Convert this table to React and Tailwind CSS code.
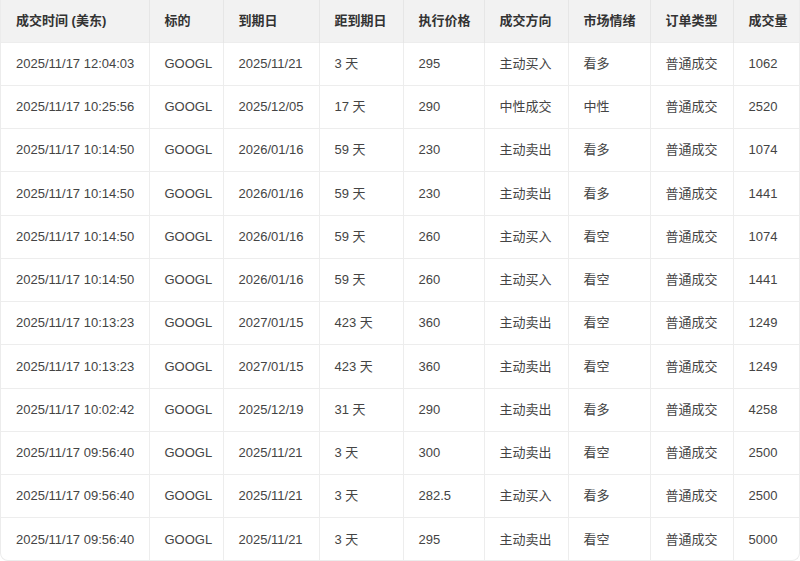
import React from 'react';

const columns = [
  { label: '成交时间 (美东)', w: 'w-[148px]' },
  { label: '标的', w: 'w-[74px]' },
  { label: '到期日', w: 'w-[96px]' },
  { label: '距到期日', w: 'w-[84px]' },
  { label: '执行价格', w: 'w-[81px]' },
  { label: '成交方向', w: 'w-[84px]' },
  { label: '市场情绪', w: 'w-[82px]' },
  { label: '订单类型', w: 'w-[83px]' },
  { label: '成交量', w: 'w-[68px]' },
];

const trades = [
  ['2025/11/17 12:04:03', 'GOOGL', '2025/11/21', '3 天', '295', '主动买入', '看多', '普通成交', '1062'],
  ['2025/11/17 10:25:56', 'GOOGL', '2025/12/05', '17 天', '290', '中性成交', '中性', '普通成交', '2520'],
  ['2025/11/17 10:14:50', 'GOOGL', '2026/01/16', '59 天', '230', '主动卖出', '看多', '普通成交', '1074'],
  ['2025/11/17 10:14:50', 'GOOGL', '2026/01/16', '59 天', '230', '主动卖出', '看多', '普通成交', '1441'],
  ['2025/11/17 10:14:50', 'GOOGL', '2026/01/16', '59 天', '260', '主动买入', '看空', '普通成交', '1074'],
  ['2025/11/17 10:14:50', 'GOOGL', '2026/01/16', '59 天', '260', '主动买入', '看空', '普通成交', '1441'],
  ['2025/11/17 10:13:23', 'GOOGL', '2027/01/15', '423 天', '360', '主动卖出', '看空', '普通成交', '1249'],
  ['2025/11/17 10:13:23', 'GOOGL', '2027/01/15', '423 天', '360', '主动卖出', '看空', '普通成交', '1249'],
  ['2025/11/17 10:02:42', 'GOOGL', '2025/12/19', '31 天', '290', '主动卖出', '看多', '普通成交', '4258'],
  ['2025/11/17 09:56:40', 'GOOGL', '2025/11/21', '3 天', '300', '主动卖出', '看空', '普通成交', '2500'],
  ['2025/11/17 09:56:40', 'GOOGL', '2025/11/21', '3 天', '282.5', '主动买入', '看多', '普通成交', '2500'],
  ['2025/11/17 09:56:40', 'GOOGL', '2025/11/21', '3 天', '295', '主动卖出', '看空', '普通成交', '5000'],
];

const TradeTable = () => {
  return (
    <div className="w-[800px] h-[561px] overflow-hidden rounded-b-lg border-b border-x border-[#ececec] bg-white font-['Liberation_Sans','Noto_Sans_CJK_SC',sans-serif]">
      <table className="w-full table-fixed border-collapse">
        <colgroup>
          {columns.map((c) => (
            <col key={c.label} className={c.w} />
          ))}
        </colgroup>
        <thead>
          <tr className="h-[42px] bg-[#f2f2f2]">
            {columns.map((c, i) => (
              <th
                key={c.label}
                className={`px-[15px] text-left text-[13px] font-bold text-[#333] whitespace-nowrap ${
                  i < columns.length - 1 ? 'border-r border-[#e6e6e6]' : ''
                }`}
              >
                {c.label}
              </th>
            ))}
          </tr>
        </thead>
        <tbody>
          {trades.map((row, r) => (
            <tr key={r} className="h-[43.25px] border-t border-[#ededed]">
              {row.map((cell, i) => (
                <td
                  key={i}
                  className={`px-[15px] text-[13px] text-[#444] whitespace-nowrap ${
                    i < row.length - 1 ? 'border-r border-[#ededed]' : ''
                  }`}
                >
                  {cell}
                </td>
              ))}
            </tr>
          ))}
        </tbody>
      </table>
    </div>
  );
};

export default function App() {
  return <TradeTable />;
}
